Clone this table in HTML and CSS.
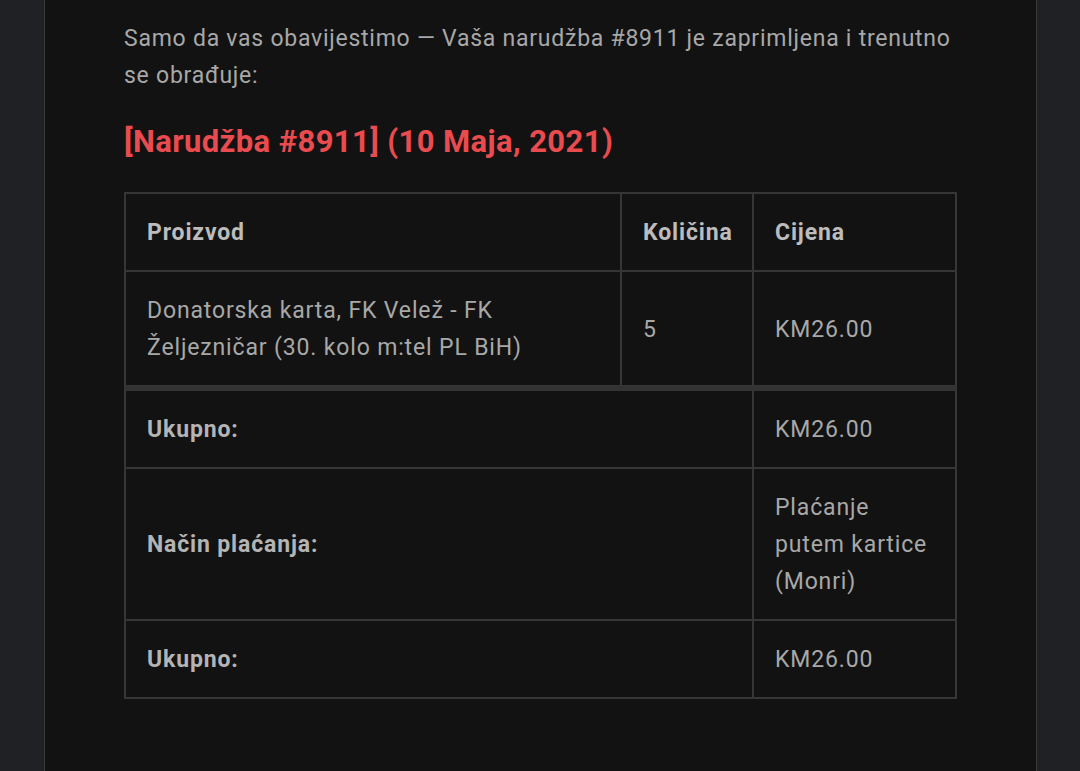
FILE: index.html
```html
<!DOCTYPE html>
<html lang="bs">
<head>
<meta charset="utf-8">
<title>Narudžba #8911</title>
<link rel="stylesheet" href="styles.css">
</head>
<body>
<div class="panel">
  <p class="intro">Samo da vas obavijestimo — Vaša narudžba #8911 je zaprimljena i trenutno se obrađuje:</p>
  <h2 class="order-title">[Narudžba #8911] (10 Maja, 2021)</h2>
  <table class="order">
    <colgroup>
      <col class="c1"><col class="c2"><col class="c3">
    </colgroup>
    <thead>
      <tr>
        <th>Proizvod</th>
        <th>Količina</th>
        <th>Cijena</th>
      </tr>
    </thead>
    <tbody>
      <tr>
        <td>Donatorska karta, FK Velež - FK Željezničar (30. kolo m:tel PL BiH)</td>
        <td>5</td>
        <td>KM26.00</td>
      </tr>
    </tbody>
    <tfoot>
      <tr class="first">
        <th colspan="2">Ukupno:</th>
        <td>KM26.00</td>
      </tr>
      <tr>
        <th colspan="2">Način plaćanja:</th>
        <td>Plaćanje putem kartice (Monri)</td>
      </tr>
      <tr>
        <th colspan="2">Ukupno:</th>
        <td>KM26.00</td>
      </tr>
    </tfoot>
  </table>
</div>
</body>
</html>
```
FILE: styles.css
```css
html, body {
  margin: 0;
  padding: 0;
  background: #202124;
  height: 100%;
}
body {
  font-family: Roboto, "Noto Sans", Arial, sans-serif;
  color: #a8a8a8;
  overflow: hidden;
}
.panel {
  margin-left: 44px;
  width: 831px;
  min-height: 100%;
  background: #121212;
  border-left: 1px solid #3a3a3a;
  border-right: 1px solid #3a3a3a;
  padding: 20px 81px 0 79px;
  box-sizing: content-box;
}
.intro {
  margin: 0;
  font-size: 23px;
  line-height: 37px;
  letter-spacing: 0.75px;
}
.order-title {
  margin: 28px 0 30px;
  font-size: 31px;
  line-height: 40px;
  font-weight: 700;
  letter-spacing: 0.4px;
  color: #ea4b4e;
}
.order {
  width: 831px;
  table-layout: fixed;
  border-spacing: 0;
  border-collapse: separate;
  border: 1px solid #363636;
  font-size: 23px;
  line-height: 37px;
  letter-spacing: 0.85px;
}
.c1 { width: 496px; }
.c2 { width: 132px; }
.c3 { width: 203px; }
.order th, .order td {
  border: 1px solid #363636;
  padding: 20px 21px 19px;
  text-align: left;
  vertical-align: middle;
  color: #a8a8a8;
  font-weight: 400;
}
.order th {
  font-weight: 700;
  color: #b4b4b4;
}
.order thead th {
  color: #bcbcbc;
}
.order tfoot tr.first th,
.order tfoot tr.first td {
  border-top: 5px solid #333;
}
```
